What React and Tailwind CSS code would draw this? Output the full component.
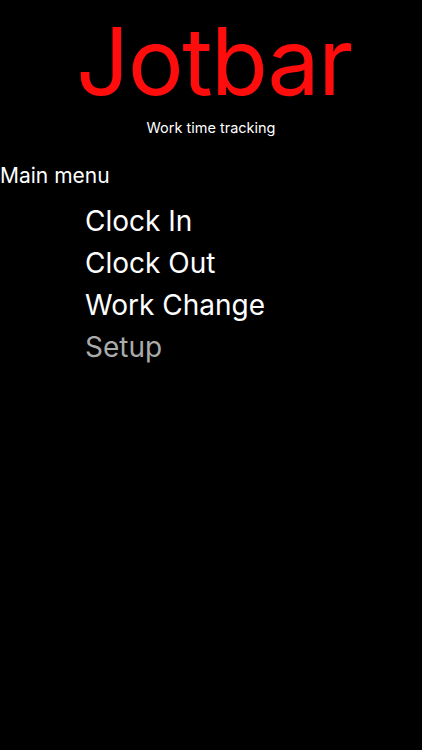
export default function App() {
  const items = [
    { label: "Clock In", dim: false },
    { label: "Clock Out", dim: false },
    { label: "Work Change", dim: false },
    { label: "Setup", dim: true },
  ];
  return (
    <div className="w-[422px] h-[750px] bg-black text-white font-['Inter',sans-serif] overflow-hidden">
      <div className="flex flex-col items-center pt-[8px]">
        <h1 className="text-[93px] leading-[106px] text-[#ff0d0d] tracking-[-1.5px] pl-[6px]">Jotbar</h1>
        <p className="text-[14.5px] leading-[18px] mt-[5px]">Work time tracking</p>
      </div>
      <p className="text-[21px] leading-[26px] mt-[26px]">Main menu</p>
      <ul className="pl-[85px] mt-[11px]">
        {items.map((item) => (
          <li
            key={item.label}
            className={"text-[28px] leading-[42px] " + (item.dim ? "text-[#ababab]" : "text-white")}
          >
            {item.label}
          </li>
        ))}
      </ul>
    </div>
  );
}
